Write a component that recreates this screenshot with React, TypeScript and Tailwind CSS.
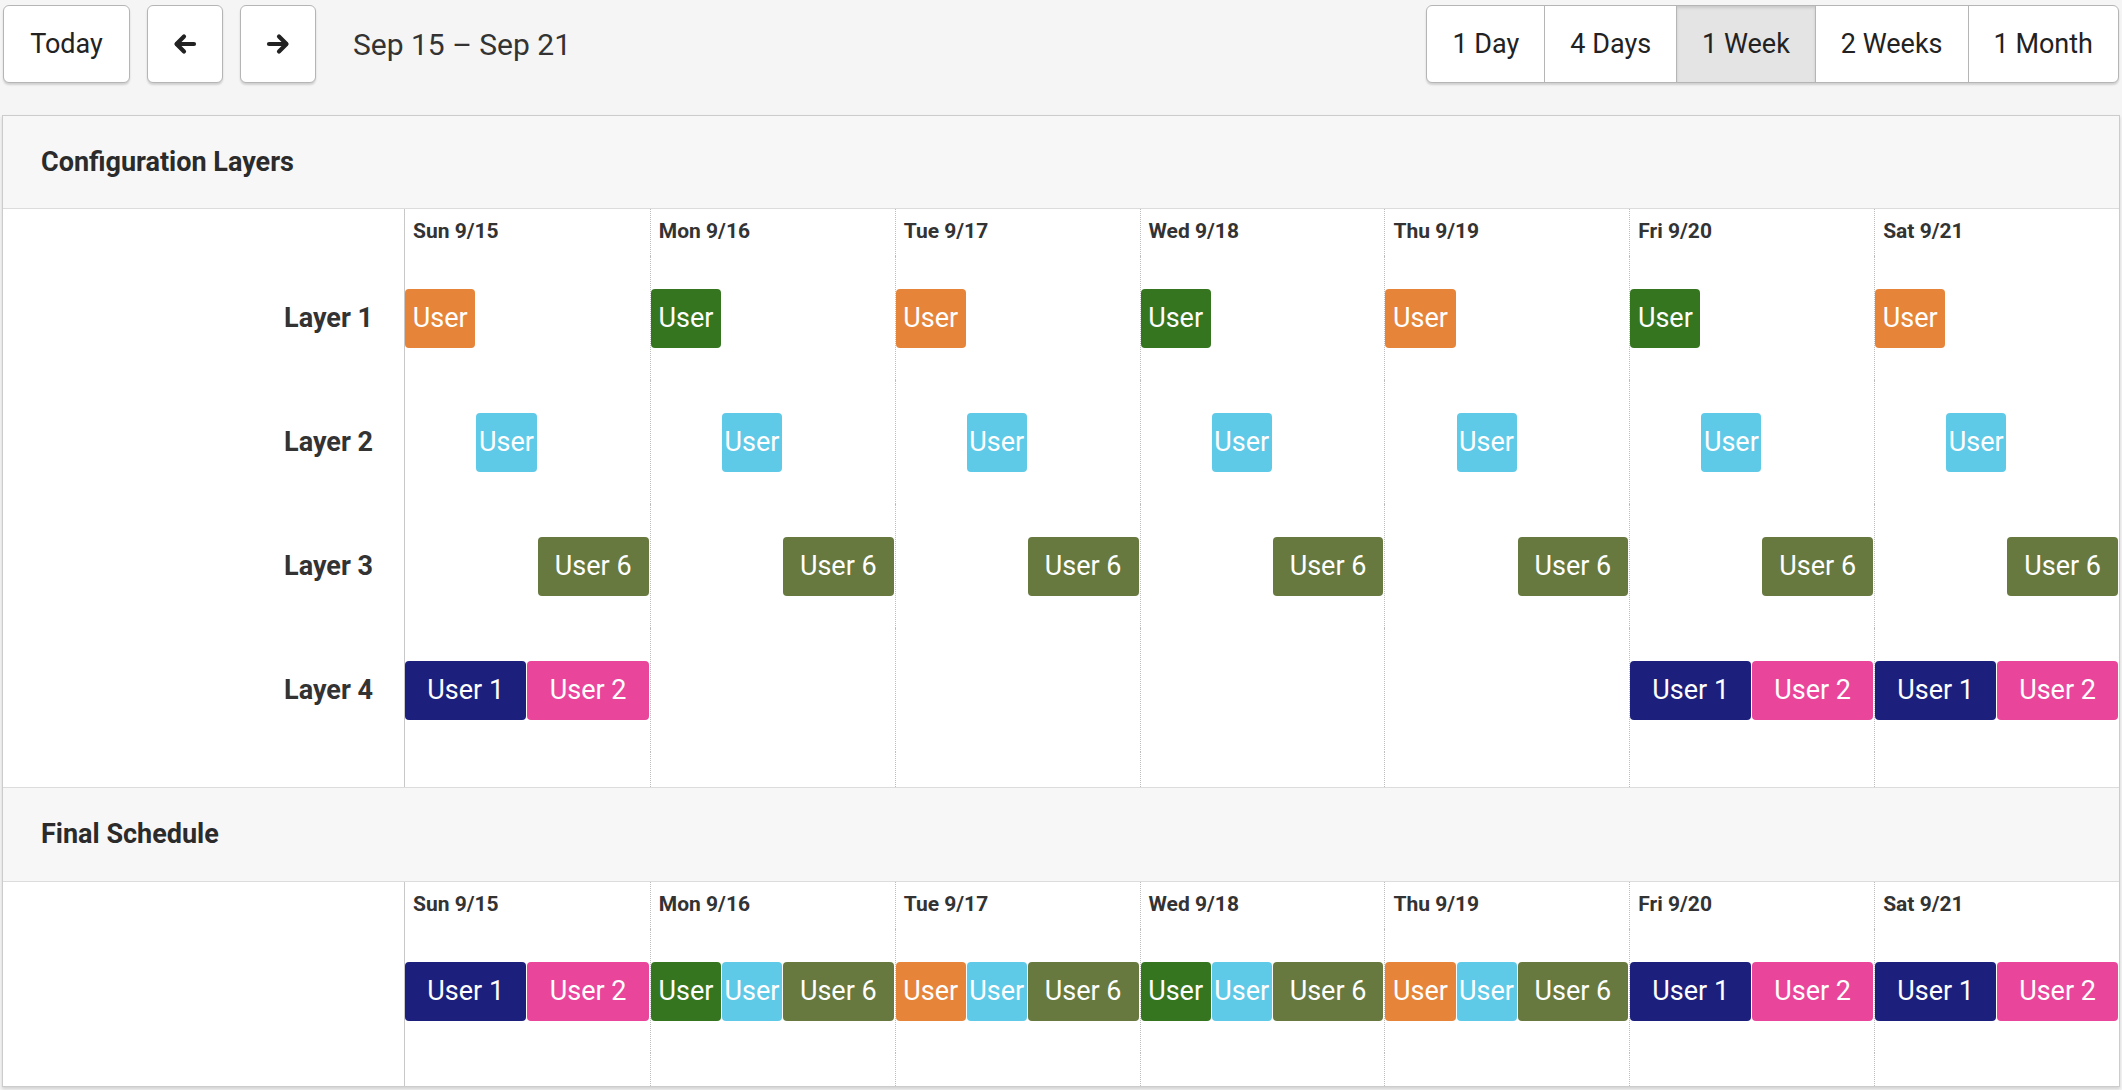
type Seg = { start: number; end: number; label: string; color: string };

const days = ["Sun 9/15", "Mon 9/16", "Tue 9/17", "Wed 9/18", "Thu 9/19", "Fri 9/20", "Sat 9/21"];
const ranges = ["1 Day", "4 Days", "1 Week", "2 Weeks", "1 Month"];

const ORANGE = "#e6853a";
const GREEN = "#357520";
const CYAN = "#5fcae8";
const OLIVE = "#67793f";
const NAVY = "#1c1f7b";
const PINK = "#e9469b";

const l1 = (i: number): Seg => ({ start: 0, end: 7, label: "User", color: i % 2 === 0 ? ORANGE : GREEN });
const l2: Seg = { start: 7, end: 13, label: "User", color: CYAN };
const l3: Seg = { start: 13, end: 24, label: "User 6", color: OLIVE };
const l4: Seg[] = [
  { start: 0, end: 12, label: "User 1", color: NAVY },
  { start: 12, end: 24, label: "User 2", color: PINK },
];
const hasL4 = (i: number) => i === 0 || i === 5 || i === 6;

const layers: { name: string; cells: Seg[][] }[] = [
  { name: "Layer 1", cells: days.map((_, i) => [l1(i)]) },
  { name: "Layer 2", cells: days.map(() => [l2]) },
  { name: "Layer 3", cells: days.map(() => [l3]) },
  { name: "Layer 4", cells: days.map((_, i) => (hasL4(i) ? l4 : [])) },
];

const finalCells: Seg[][] = days.map((_, i) => (hasL4(i) ? l4 : [l1(i), l2, l3]));

const pct = (h: number) => `${(h / 24) * 100}%`;

function Arrow({ dir }: { dir: "left" | "right" }) {
  return (
    <svg width="24" height="22" viewBox="0 0 24 22" fill="none" stroke="#222" strokeWidth="4.2" strokeLinecap="round" strokeLinejoin="round">
      {dir === "left" ? (
        <>
          <path d="M21 11H4" />
          <path d="M11 3.5L3.5 11L11 18.5" />
        </>
      ) : (
        <>
          <path d="M3 11H20" />
          <path d="M13 3.5L20.5 11L13 18.5" />
        </>
      )}
    </svg>
  );
}

function DayCell({ segs, i }: { segs: Seg[]; i: number }) {
  const items: JSX.Element[] = [];
  let t = 0;
  segs.forEach((s, k) => {
    if (s.start > t) items.push(<div key={`g${k}`} style={{ width: pct(s.start - t) }} />);
    items.push(
      <div key={k} className="h-[59px] pr-px" style={{ width: pct(s.end - s.start) }}>
        <div
          className="h-full rounded-[4px] flex items-center justify-center overflow-hidden whitespace-nowrap text-white text-[27px]"
          style={{ backgroundColor: s.color }}
        >
          {s.label}
        </div>
      </div>
    );
    t = s.end;
  });
  return (
    <div className={i === 0 ? "flex items-center" : "flex items-center border-l border-dotted border-[#bdbdbd]"}>
      {items}
    </div>
  );
}

function DayGrid({ rows }: { rows: Seg[][][] }) {
  return (
    <div className="flex-1 flex flex-col">
      <div className="grid grid-cols-7 h-[47px]">
        {days.map((d, i) => (
          <div
            key={d}
            className={i === 0 ? "pt-[7px] pl-[8px] text-[21px] font-bold text-[#333]" : "pt-[7px] pl-[8px] text-[21px] font-bold text-[#333] border-l border-dotted border-[#bdbdbd]"}
          >
            {d}
          </div>
        ))}
      </div>
      {rows.map((cells, r) => (
        <div key={r} className="grid grid-cols-7 h-[124px]">
          {cells.map((segs, i) => (
            <DayCell key={i} segs={segs} i={i} />
          ))}
        </div>
      ))}
      <div className="grid grid-cols-7 flex-1">
        {days.map((d, i) => (
          <div key={d} className={i === 0 ? "" : "border-l border-dotted border-[#bdbdbd]"} />
        ))}
      </div>
    </div>
  );
}

function SectionHeader({ title, top }: { title: string; top?: boolean }) {
  return (
    <div
      className={
        top
          ? "h-[93px] flex items-center pl-[38px] bg-[#f7f7f7] border-b border-[#dcdcdc] text-[27px] font-bold text-[#2b2b2b]"
          : "h-[95px] flex items-center pl-[38px] bg-[#f7f7f7] border-y border-[#dcdcdc] text-[27px] font-bold text-[#2b2b2b]"
      }
    >
      {title}
    </div>
  );
}

export default function App() {
  return (
    <div
      className="w-[2122px] h-[1090px] overflow-hidden bg-[#f5f5f5] px-[2px] text-[#222]"
      style={{ fontFamily: "Roboto, 'Liberation Sans', sans-serif" }}
    >
      {/* toolbar */}
      <div className="flex items-center pt-[5px] h-[115px] pb-[32px]">
        <button className="h-[78px] w-[127px] bg-white border border-[#b5b5b5] rounded-md shadow-[0_2px_2px_rgba(0,0,0,0.15)] text-[27px] ml-px">
          Today
        </button>
        <button className="h-[78px] w-[76px] ml-[17px] bg-white border border-[#b5b5b5] rounded-md shadow-[0_2px_2px_rgba(0,0,0,0.15)] flex items-center justify-center">
          <Arrow dir="left" />
        </button>
        <button className="h-[78px] w-[76px] ml-[17px] bg-white border border-[#b5b5b5] rounded-md shadow-[0_2px_2px_rgba(0,0,0,0.15)] flex items-center justify-center">
          <Arrow dir="right" />
        </button>
        <div className="ml-[37px] text-[30px] text-[#333]">Sep 15 – Sep 21</div>
        <div className="ml-auto mr-px flex h-[78px] bg-white border border-[#b5b5b5] rounded-md overflow-hidden shadow-[0_2px_2px_rgba(0,0,0,0.15)]">
          {ranges.map((r, i) => (
            <button
              key={r}
              className={
                r === "1 Week"
                  ? "px-[25px] text-[27px] border-l border-[#b5b5b5] bg-[#e4e4e4] shadow-[inset_0_2px_3px_rgba(0,0,0,0.12)]"
                  : i === 0
                  ? "px-[25px] text-[27px]"
                  : "px-[25px] text-[27px] border-l border-[#b5b5b5]"
              }
            >
              {r}
            </button>
          ))}
        </div>
      </div>

      {/* schedule panel */}
      <div className="bg-white border border-[#cccccc] shadow-[0_2px_3px_rgba(0,0,0,0.15)]">
        <SectionHeader title="Configuration Layers" top />
        <div className="flex h-[578px]">
          <div className="w-[402px] border-r border-[#c8c8c8] flex flex-col">
            <div className="h-[47px]" />
            {layers.map((l) => (
              <div key={l.name} className="h-[124px] flex items-center justify-end pr-[31px] text-[27px] font-bold text-[#333]">
                {l.name}
              </div>
            ))}
          </div>
          <DayGrid rows={layers.map((l) => l.cells)} />
        </div>
        <SectionHeader title="Final Schedule" />
        <div className="flex h-[204px]">
          <div className="w-[402px] border-r border-[#c8c8c8]" />
          <DayGrid rows={[finalCells]} />
        </div>
      </div>
    </div>
  );
}
